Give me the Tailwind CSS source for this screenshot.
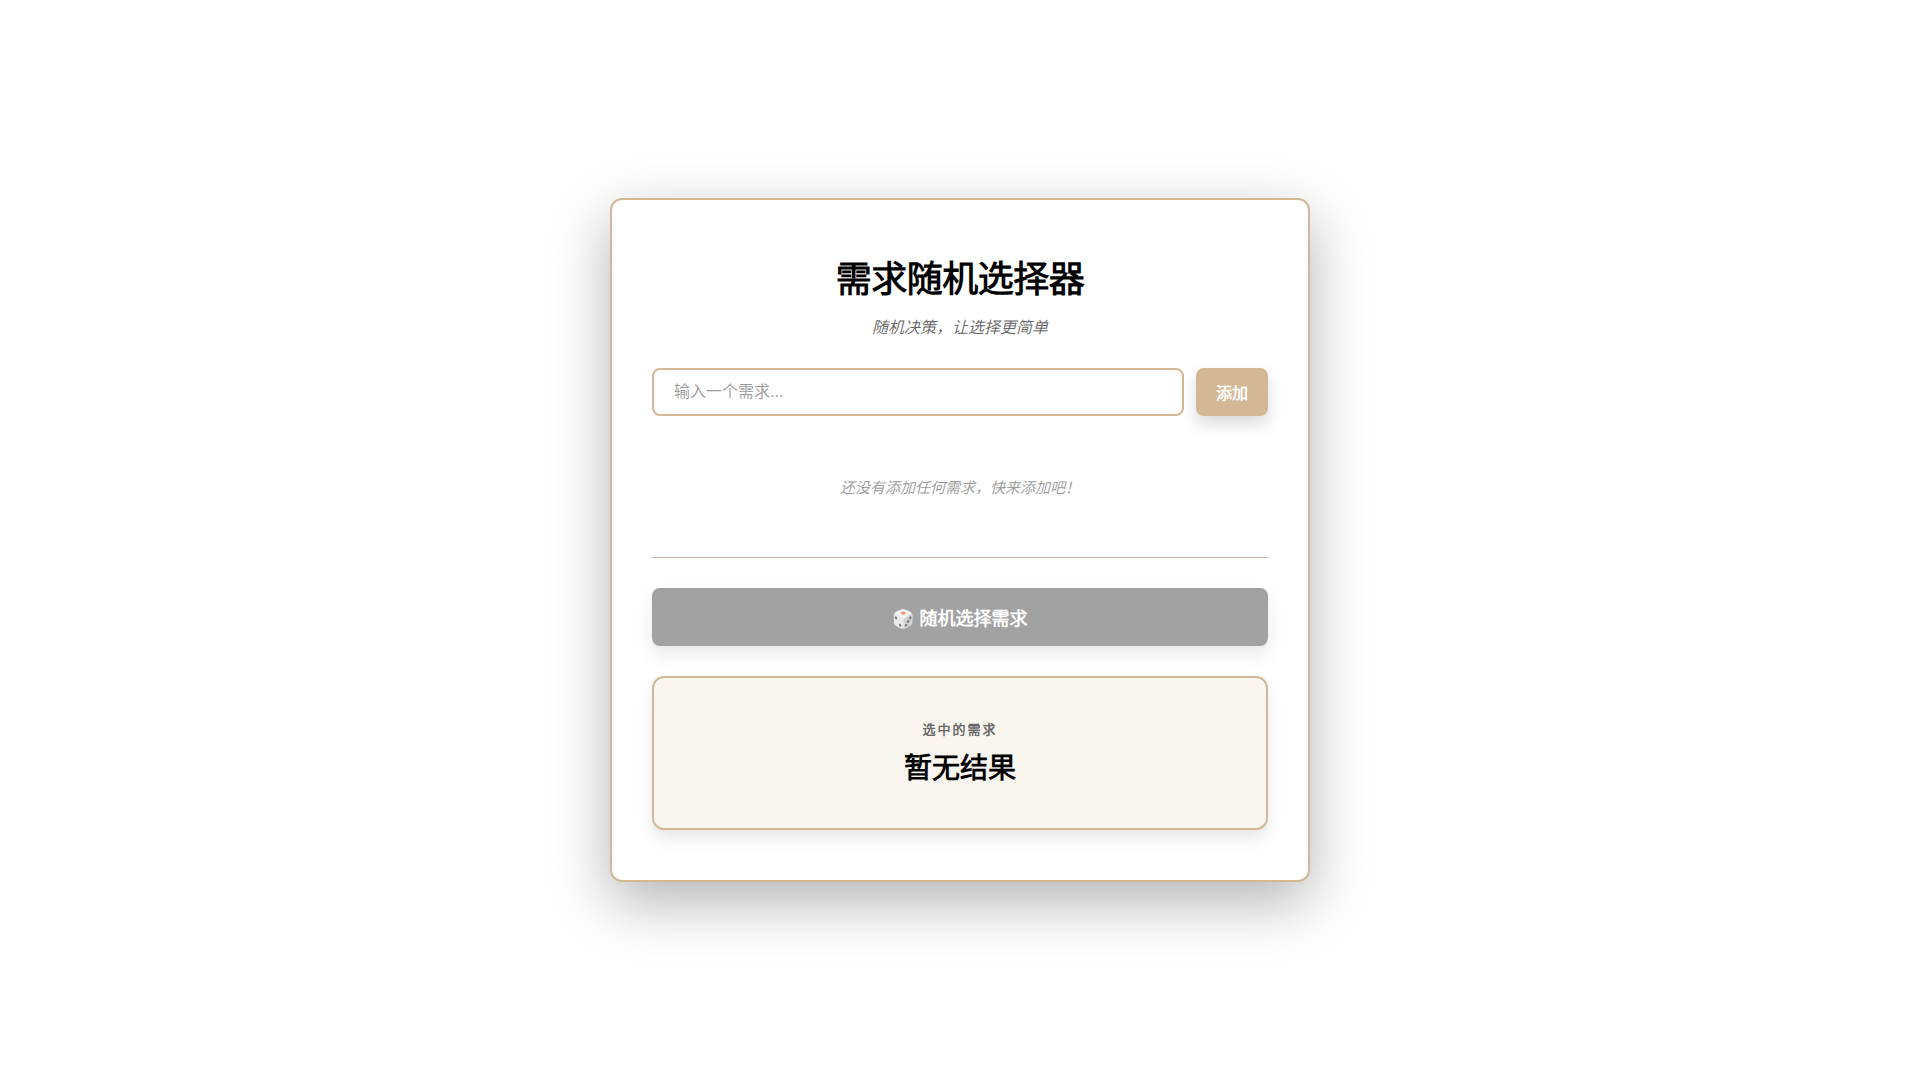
<!doctype html>
<html lang="zh-CN">
  <head>
    <meta charset="UTF-8" />
    <meta name="viewport" content="width=device-width, initial-scale=1.0" />
    <title>需求随机选择器</title>
    <script src="https://cdn.jsdelivr.net/npm/@tailwindcss/browser@4"></script>
  </head>
  <body class="flex min-h-screen items-center justify-center bg-white p-5 font-['Liberation_Sans','Noto_Sans_CJK_SC_DemiLight','Noto_Sans_CJK_SC',sans-serif] text-black">
    <main class="w-full max-w-[700px] rounded-xl border-2 border-[#d4b896] bg-white px-10 py-[50px] shadow-[0_20px_60px_rgba(0,0,0,0.3)]">
      <h1 class="mb-1.5 text-center text-[36px] leading-[60px] font-bold tracking-[-0.5px]">需求随机选择器</h1>
      <p class="mb-7 text-center text-base leading-6 text-[#666666] italic">随机决策，让选择更简单</p>

      <form id="addForm" class="flex gap-3">
        <input
          type="text"
          id="itemInput"
          aria-label="需求"
          placeholder="输入一个需求..."
          class="h-12 min-w-0 flex-1 rounded-lg border-2 border-[#d4b896] bg-white px-5 text-base outline-none placeholder:text-[#999999]"
        >
        <button type="submit" class="h-12 rounded-lg bg-[#d4b896] px-5 pt-1 text-base font-bold text-white shadow-[0_8px_16px_rgba(0,0,0,0.15)]">添加</button>
      </form>

      <ul id="itemList" class="border-b border-[#c9b299] pt-[59px] pb-[57px] text-center text-[15px] leading-[25px]">
        <li class="text-[#999999] italic">还没有添加任何需求，快来添加吧！</li>
      </ul>

      <button
        id="pickBtn"
        disabled
        class="mt-[30px] h-[58px] w-full rounded-lg bg-[#d4b896] pt-1 text-lg font-bold text-white shadow-[0_8px_16px_rgba(0,0,0,0.15)] disabled:bg-[#666666] disabled:opacity-60"
      >🎲 随机选择需求</button>

      <section class="mt-[30px] flex h-[154px] flex-col items-center justify-center rounded-xl border-2 border-[#d4b896] bg-[#f9f6ef] pt-1 shadow-[0_8px_16px_rgba(0,0,0,0.1)]">
        <h2 class="mb-2 text-[13px] leading-5 font-bold tracking-[2px] text-[#666666]">选中的需求</h2>
        <p id="result" class="text-[28px] leading-[42px] font-bold">暂无结果</p>
      </section>
    </main>

    <script>
      const items = [];
      const form = document.getElementById('addForm');
      const input = document.getElementById('itemInput');
      const list = document.getElementById('itemList');
      const pickBtn = document.getElementById('pickBtn');

      form.addEventListener('submit', function(e) {
        e.preventDefault();
        const text = input.value.trim();
        if (!text) return;

        items.push(text);
        input.value = '';
        pickBtn.disabled = false;

        list.innerHTML = '';
        items.forEach(function(item) {
          const li = document.createElement('li');
          li.textContent = item;
          list.appendChild(li);
        });
      });

      pickBtn.addEventListener('click', function() {
        const index = Math.floor(Math.random() * items.length);
        document.getElementById('result').textContent = items[index];
      });
    </script>
  </body>
</html>
